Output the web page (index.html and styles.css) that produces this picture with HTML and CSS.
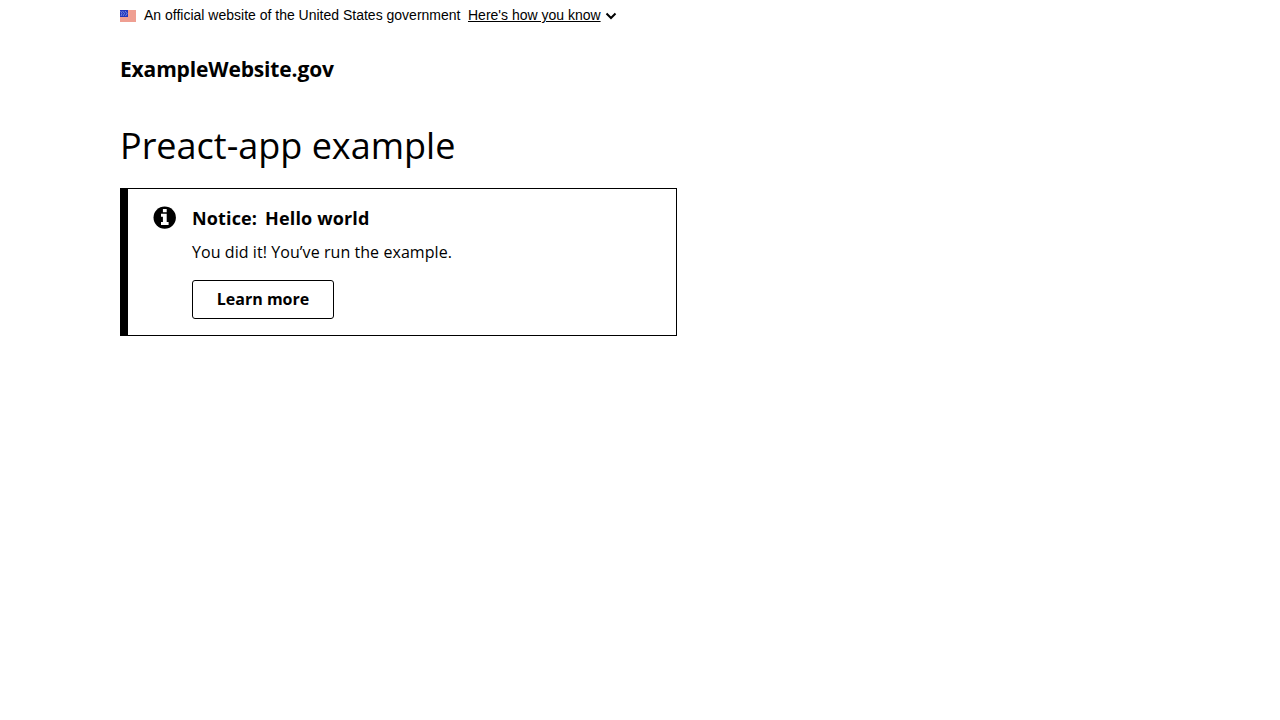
FILE: index.html
```html
<!DOCTYPE html>
<html lang="en">
<head>
<meta charset="utf-8">
<title>Preact-app example</title>
<link rel="stylesheet" href="styles.css">
</head>
<body>
<section class="banner">
  <svg class="flag" viewBox="0 0 16 12" width="16" height="12"><rect width="16" height="12" fill="#ef9f92"/><rect width="8" height="7" fill="#2136bd"/><path d="M.5 1l1.500 2.500l-1 2.500M2.500 1l2 2.500l-1.500 2.500M5 1l2 2.500l-1.500 2.500" fill="none" stroke="#8b9be5" stroke-width=".8"/></svg>
  <p class="banner-text">An official website of the United States government</p>
  <button class="banner-toggle"><span>Here's how you know</span><svg class="chevron" viewBox="0 0 12 8" width="12" height="8"><path d="M1.500 1.500L6 6l4.500-4.500" fill="none" stroke="#000" stroke-width="2"/></svg></button>
</section>
<header class="header"><a class="site-title">ExampleWebsite.gov</a></header>
<main class="main">
  <h1 class="title">Preact-app example</h1>
  <section class="notice">
    <svg class="notice-icon" viewBox="0 0 23 23" width="23" height="23"><circle cx="11.700" cy="11.600" r="11.200"/><path d="M9.900 2.900h3.800v3.400h-3.800zM8 7.800h5.700v8.200h1.900v3h-7.600v-3h1.900v-5.200h-1.900z" fill="#fff"/></svg>
    <div class="notice-body">
      <h2 class="notice-heading"><span>Notice:</span><span>Hello world</span></h2>
      <p class="notice-text">You did it! You’ve run the example.</p>
      <button class="button">Learn more</button>
    </div>
  </section>
</main>
</body>
</html>
```
FILE: styles.css
```css
* { box-sizing: border-box; }
body { margin: 0; padding: 0 120px; background: #fff; color: #000; font-family: "Open Sans", sans-serif; }
h1, h2, p { margin: 0; }
button { margin: 0; background: #fff; color: #000; font: inherit; }
.banner { display: flex; align-items: center; height: 32px; padding-bottom: 2px; font: 14px/20px "Liberation Sans", sans-serif; }
.flag { margin: 2px 8px 0 0; }
.banner-text { margin-right: 7.500px; }
.banner-toggle { display: flex; align-items: center; gap: 4px; padding: 0; border: 0; }
.banner-toggle span { text-decoration: underline; }
.chevron { margin-top: 2px; }
.header { padding-top: 22px; }
.site-title { display: block; font-size: 21px; line-height: 30px; font-weight: 700; letter-spacing: -0.15px; }
.title { margin-top: 37px; font-size: 36px; line-height: 50px; font-weight: 400; }
.notice { display: flex; width: 557px; height: 148px; margin-top: 17px; padding: 16px 24px; border: 1px solid #000; border-left-width: 8px; }
.notice-icon { flex: none; margin: 1px 16px 0 1px; }
.notice-heading { display: flex; gap: 8px; font-size: 18px; line-height: 26px; font-weight: 700; letter-spacing: 0.140px; }
.notice-text { margin-top: 9px; font-size: 16px; line-height: 24px; letter-spacing: 0.065px; }
.button { display: block; margin-top: 16px; width: 142px; height: 39px; border: 1px solid #000; border-radius: 3px; font-size: 16px; font-weight: 700; padding: 0 0 1px; }
```
